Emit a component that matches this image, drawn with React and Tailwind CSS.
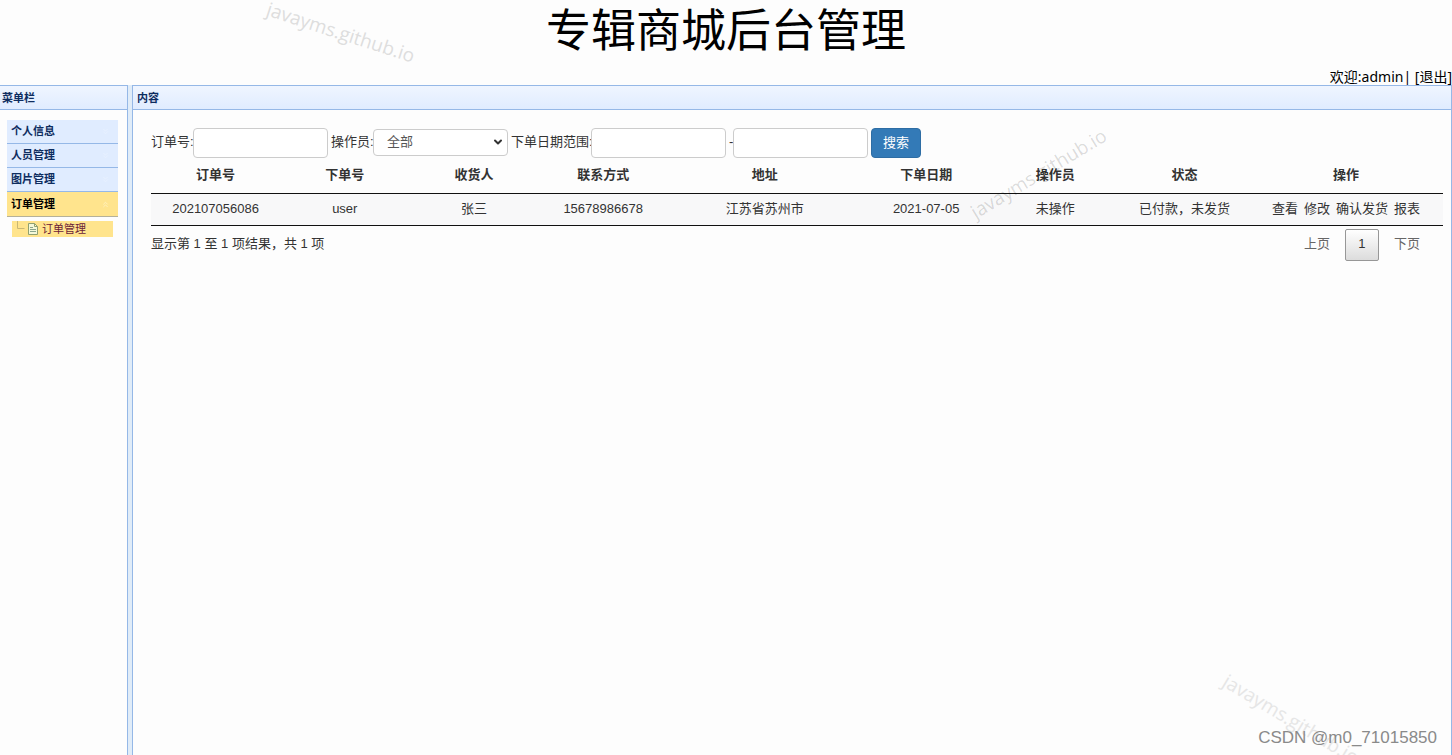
import { ChevronDown, ChevronsDown, ChevronsUp } from "lucide-react";

const sans = "font-['Liberation_Sans','Noto_Sans_CJK_SC',sans-serif]";
const menu = ["个人信息", "人员管理", "图片管理", "订单管理"];
const columns = [
  ["订单号", "w-[10%]"],
  ["下单号", "w-[10%]"],
  ["收货人", "w-[10%]"],
  ["联系方式", "w-[10%]"],
  ["地址", "w-[15%]"],
  ["下单日期", "w-[10%]"],
  ["操作员", "w-[10%]"],
  ["状态", "w-[10%]"],
  ["操作", "w-[15%]"],
];
const rows = [
  ["202107056086", "user", "张三", "15678986678", "江苏省苏州市", "2021-07-05", "未操作", "已付款，未发货"],
];
const actions = ["查看", "修改", "确认发货", "报表"];
const field = "w-[135px] rounded border border-[#ccc] bg-white text-[13px] text-[#555] outline-none";
const label = "shrink-0 pb-[2px] whitespace-nowrap";
const panelTitle =
  "h-[25px] border-y border-[#95b8e7] bg-linear-to-b from-[#eff5ff] to-[#e0ecff] px-1 text-[11px] leading-[24px] font-bold text-[#0e2d5f]";

function DocIcon() {
  return (
    <svg width="12" height="14" viewBox="0 0 12 14" fill="none" aria-hidden="true">
      <path d="M1.500 1.500h6l3 3v8h-9z" fill="#f4f8d8" stroke="#8fa070" />
      <path d="M7.500 1.500v3h3" stroke="#8fa070" />
      <path d="M3 5.500h3M3 7.500h6M3 9.500h6" stroke="#8aa58c" />
    </svg>
  );
}

function Sidebar() {
  return (
    <aside className="flex w-32 shrink-0 flex-col border-r border-[#95b8e7]">
      <h2 className={`${panelTitle} pl-[2px]`}>菜单栏</h2>
      <nav className="flex flex-col pt-[10px] pr-[9px] pl-[7px] text-[11px]">
        {menu.map((name, i) => {
          const open = i === menu.length - 1;
          const Arrow = open ? ChevronsUp : ChevronsDown;
          return (
            <button
              key={name}
              type="button"
              aria-expanded={open}
              className={`flex items-center justify-between border-b pr-2 pl-1 font-bold ${
                open
                  ? "h-[25px] border-[#b5b199] bg-[#ffe48d] text-black"
                  : "h-[24px] border-[#95b8e7] bg-[#e0ecff] text-[#0e2d5f]"
              }`}
            >
              {name}
              <Arrow size={9} className={open ? "text-[#fff3cb]" : "text-[#eaf2ff]"} />
            </button>
          );
        })}
        <a
          href="#orders"
          className="mx-[5px] mt-1 flex h-4 items-center bg-[#ffe48d] pl-1 text-[#6b2138]"
        >
          <svg width="11" height="16" viewBox="0 0 11 16" fill="none" aria-hidden="true">
            <path d="M1.500 0v7.500h7" stroke="#c9b774" />
          </svg>
          <DocIcon />
          <span className="ml-[3px]">订单管理</span>
        </a>
      </nav>
    </aside>
  );
}

function SearchForm() {
  return (
    <form className="flex items-center" onSubmit={(e) => e.preventDefault()}>
      <label htmlFor="no" className={`${label} w-[42px]`}>订单号:</label>
      <input id="no" className={`${field} mr-[3px] h-[30px] px-3`} />
      <label htmlFor="operator" className={`${label} w-[42px]`}>操作员:</label>
      <div className="mr-[3px] grid items-center pb-[2px]">
        <select id="operator" className={`${field} col-start-1 row-start-1 h-[27px] appearance-none px-[13px]`}>
          <option>全部</option>
        </select>
        <ChevronDown
          size={12}
          strokeWidth={4}
          className="pointer-events-none col-start-1 row-start-1 mr-1 justify-self-end text-[#333]"
        />
      </div>
      <label htmlFor="from" className={`${label} w-[80px]`}>下单日期范围:</label>
      <input id="from" className={`${field} mr-[3px] h-[30px] px-3`} />
      <label htmlFor="to" aria-label="结束日期" className={`${label} w-1`}>-</label>
      <input id="to" className={`${field} mr-[3px] h-[30px] px-3`} />
      <button type="submit" className="h-[30px] rounded border border-[#2e6da4] bg-[#337ab7] px-[11px] text-white">
        搜索
      </button>
    </form>
  );
}

function Watermark({ className }) {
  return (
    <span className={`pointer-events-none absolute font-['Open_Sans','Noto_Sans',sans-serif] text-[19px] leading-6 whitespace-nowrap ${className}`}>
      javayms.github.io
    </span>
  );
}

export default function App() {
  return (
    <div className={`relative flex min-h-screen flex-col overflow-hidden bg-[#fdfdfd] ${sans}`}>
      <header className="flex h-[85px] flex-col justify-between font-['Noto_Sans','Noto_Sans_CJK_SC',sans-serif] text-black">
        <h1 className="text-center text-[45px] leading-[56px] font-['Noto_Sans_CJK_SC',sans-serif]">专辑商城后台管理</h1>
        <p className="text-right text-sm leading-4">
          欢迎:admin| [<a href="#logout">退出</a>]
        </p>
      </header>

      <div className="flex grow">
        <Sidebar />
        <div className="w-1 shrink-0 bg-[#e0ecf8]" />
        <main className="flex min-w-0 grow flex-col border-x border-[#95b8e7]">
          <h2 className={panelTitle}>内容</h2>
          <div className="pt-[18px] pr-2 pl-[18px] text-[13px] leading-5 text-[#333]">
            <SearchForm />
            <table className="w-full table-fixed border-collapse text-center whitespace-nowrap">
              <thead>
                <tr className="h-[35px] border-b border-[#111]">
                  {columns.map(([name, width]) => (
                    <th key={name} className={`${width} pb-px font-bold`}>{name}</th>
                  ))}
                </tr>
              </thead>
              <tbody>
                {rows.map((row) => (
                  <tr key={row[0]} className="h-8 border-b border-[#111] bg-[#f8f8f9]">
                    {row.map((cell) => (
                      <td key={cell}>{cell}</td>
                    ))}
                    <td>
                      <div className="flex justify-center gap-[6px]">
                        {actions.map((a) => (
                          <a key={a} href="#order">{a}</a>
                        ))}
                      </div>
                    </td>
                  </tr>
                ))}
              </tbody>
            </table>
            <div className="flex items-start justify-between pt-[3px]">
              <p className="pt-[5px]">显示第 1 至 1 项结果，共 1 项</p>
              <div className="flex items-center gap-[15px] pr-[23px] text-[#666]">
                <button type="button" className="pb-[2px]">上页</button>
                <button
                  type="button"
                  aria-current="page"
                  className="h-8 w-[34px] rounded-xs border border-[#979797] bg-linear-to-b from-white to-[#dcdcdc] pb-[2px] text-[#333]"
                >
                  1
                </button>
                <button type="button" className="pb-[2px]">下页</button>
              </div>
            </div>
          </div>
        </main>
      </div>

      <Watermark className="top-[-3px] left-[271px] origin-top-left rotate-[18deg] text-[#dedede]" />
      <Watermark className="top-[203px] left-[966px] origin-top-left rotate-[-31deg] text-black/15" />
      <Watermark className="top-[669px] left-[1231px] origin-top-left rotate-[31deg] text-[#e6e6e6]" />
      <span className="pointer-events-none absolute right-[15px] bottom-[5px] text-[17px] leading-6 text-[#8a8a8a]">
        CSDN @m0_71015850
      </span>
    </div>
  );
}
